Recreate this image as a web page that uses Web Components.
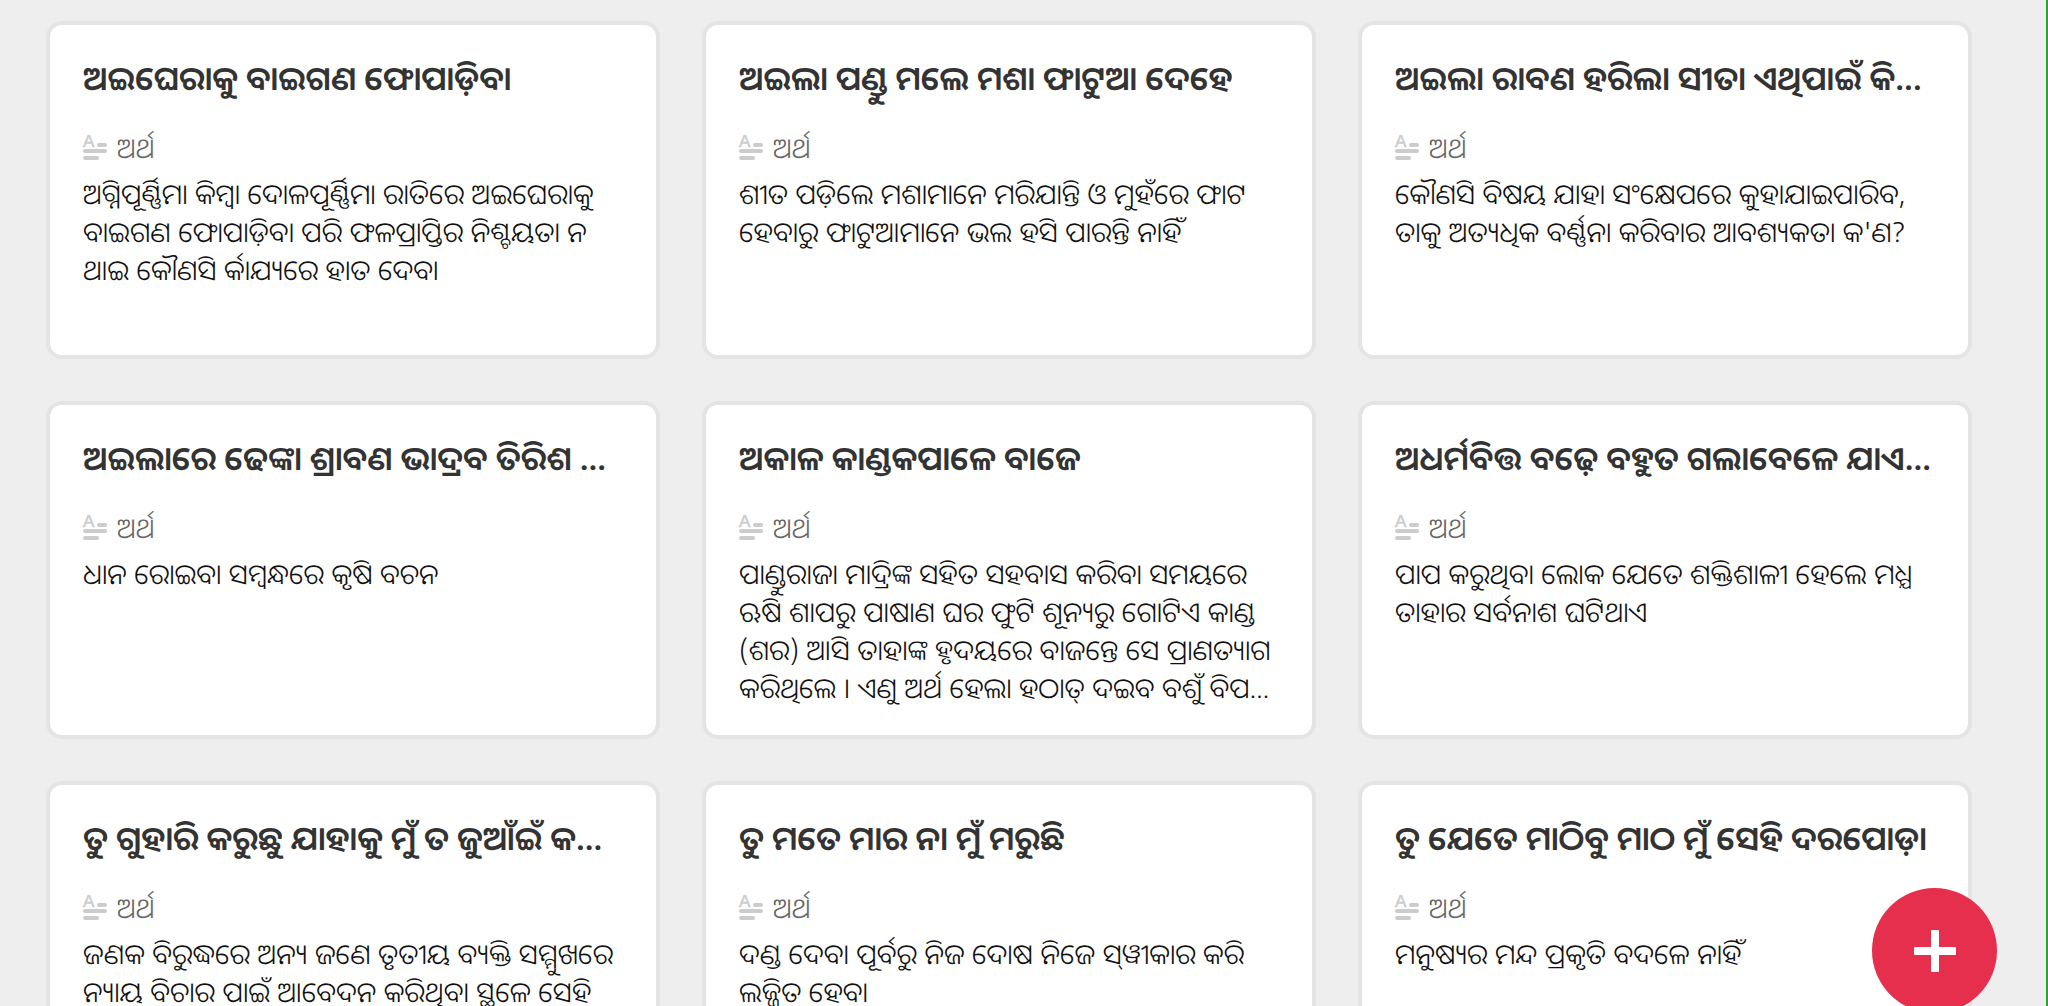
<!DOCTYPE html>
<html lang="or">
<head>
  <meta charset="UTF-8">
  <meta name="viewport" content="width=device-width, initial-scale=1">
  <title>ଢଗ ଢମାଳି</title>
  <style>
    body {
      margin: 0;
      font-family: "Noto Sans Oriya", "Noto Sans", "Liberation Sans", sans-serif;
      background-color: #eee;
    }
  </style>
</head>
<body>
  <proverb-board>
    <proverb-card>
      <span slot="title">ଅଇଘେରାକୁ ବାଇଗଣ ଫୋପାଡ଼ିବା</span>
      ଅଗ୍ନିପୂର୍ଣ୍ଣିମା କିମ୍ବା ଦୋଳପୂର୍ଣ୍ଣିମା ରାତିରେ ଅଇଘେରାକୁ<br>
      ବାଇଗଣ ଫୋପାଡ଼ିବା ପରି ଫଳପ୍ରାପ୍ତିର ନିଶ୍ଚୟତା ନ<br>
      ଥାଇ କୌଣସି ର୍କାଯ୍ୟରେ ହାତ ଦେବା
    </proverb-card>
    <proverb-card>
      <span slot="title">ଅଇଲା ପଣ୍ଡୁ ମଲେ ମଶା ଫାଟୁଆ ଦେହେ</span>
      ଶୀତ ପଡ଼ିଲେ ମଶାମାନେ ମରିଯାନ୍ତି ଓ ମୁହଁରେ ଫାଟ<br>
      ହେବାରୁ ଫାଟୁଆମାନେ ଭଲ ହସି ପାରନ୍ତି ନାହିଁ
    </proverb-card>
    <proverb-card>
      <span slot="title">ଅଇଲା ରାବଣ ହରିଲା ସୀତା ଏଥିପାଇଁ କି...</span>
      କୌଣସି ବିଷୟ ଯାହା ସଂକ୍ଷେପରେ କୁହାଯାଇପାରିବ,<br>
      ତାକୁ ଅତ୍ୟଧିକ ବର୍ଣ୍ଣନା କରିବାର ଆବଶ୍ୟକତା କ'ଣ?
    </proverb-card>
    <proverb-card>
      <span slot="title">ଅଇଲାରେ ଢେଙ୍କା ଶ୍ରାବଣ ଭାଦ୍ରବ ତିରିଶ ...</span>
      ଧାନ ରୋଇବା ସମ୍ବନ୍ଧରେ କୃଷି ବଚନ
    </proverb-card>
    <proverb-card>
      <span slot="title">ଅକାଳ କାଣ୍ଡକପାଳେ ବାଜେ</span>
      ପାଣ୍ଡୁରାଜା ମାଦ୍ରିଙ୍କ ସହିତ ସହବାସ କରିବା ସମୟରେ<br>
      ଋଷି ଶାପରୁ ପାଷାଣ ଘର ଫୁଟି ଶୂନ୍ୟରୁ ଗୋଟିଏ କାଣ୍ଡ<br>
      (ଶର) ଆସି ତାହାଙ୍କ ହୃଦୟରେ ବାଜନ୍ତେ ସେ ପ୍ରାଣତ୍ୟାଗ<br>
      କରିଥିଲେ । ଏଣୁ ଅର୍ଥ ହେଲା ହଠାତ୍ ଦଇବ ବଶୁଁ ବିପ...
    </proverb-card>
    <proverb-card>
      <span slot="title">ଅଧର୍ମବିତ୍ତ ବଢ଼େ ବହୁତ ଗଲାବେଳେ ଯାଏ...</span>
      ପାପ କରୁଥିବା ଲୋକ ଯେତେ ଶକ୍ତିଶାଳୀ ହେଲେ ମଧ୍ଯ<br>
      ତାହାର ସର୍ବନାଶ ଘଟିଥାଏ
    </proverb-card>
    <proverb-card>
      <span slot="title">ତୁ ଗୁହାରି କରୁଛୁ ଯାହାକୁ ମୁଁ ତ ଜୁଆଁଇଁ କ...</span>
      ଜଣକ ବିରୁଦ୍ଧରେ ଅନ୍ୟ ଜଣେ ତୃତୀୟ ବ୍ୟକ୍ତି ସମ୍ମୁଖରେ<br>
      ନ୍ୟାୟ ବିଚାର ପାଇଁ ଆବେଦନ କରିଥିବା ସ୍ଥଳେ ସେହି
    </proverb-card>
    <proverb-card>
      <span slot="title">ତୁ ମତେ ମାର ନା ମୁଁ ମରୁଛି</span>
      ଦଣ୍ଡ ଦେବା ପୂର୍ବରୁ ନିଜ ଦୋଷ ନିଜେ ସ୍&zwnj;ୱୀକାର କରି<br>
      ଲଜ୍ଜିତ ହେବା
    </proverb-card>
    <proverb-card>
      <span slot="title">ତୁ ଯେତେ ମାଠିବୁ ମାଠ ମୁଁ ସେହି ଦରପୋଡ଼ା</span>
      ମନୁଷ୍ୟର ମନ୍ଦ ପ୍ରକୃତି ବଦଳେ ନାହିଁ
    </proverb-card>
  </proverb-board>
  <add-button></add-button>

  <script>
    class ProverbBoard extends HTMLElement {
      constructor() {
        super();
        this.attachShadow({ mode: 'open' });
      }

      connectedCallback() {
        this.shadowRoot.innerHTML = `
          <style>
            :host {
              display: block;
              box-sizing: border-box;
              height: 100vh;
              overflow-y: auto;
              scrollbar-width: none;
              border-right: 2px solid #1ea82e;
            }

            main {
              display: grid;
              grid-template-columns: repeat(3, minmax(0, 1fr));
              grid-auto-rows: minmax(338px, auto);
              gap: 42px;
              padding: 21px 74px 42px 46px;
            }

            @media (max-width: 1200px) {
              main {
                grid-template-columns: minmax(0, 1fr);
                padding: 21px;
              }
            }
          </style>

          <main><slot></slot></main>
        `;
      }
    }

    class ProverbCard extends HTMLElement {
      constructor() {
        super();
        this.attachShadow({ mode: 'open' });
      }

      connectedCallback() {
        this.shadowRoot.innerHTML = `
          <style>
            :host {
              display: block;
              box-sizing: border-box;
              border: 4px solid #e4e4e4;
              border-radius: 16px;
              background-color: #fff;
              padding: 31px 33px 24px;
            }

            article {
              display: flex;
              flex-direction: column;
            }

            h2 {
              margin: 0;
              color: #333;
              font-size: 33px;
              font-weight: 600;
              line-height: 44px;
              white-space: nowrap;
            }

            h3 {
              display: flex;
              align-items: center;
              gap: 10px;
              margin: 28px 0 8px;
              color: #666;
              font-size: 28px;
              font-weight: 300;
              line-height: 38px;
            }

            svg {
              width: 24px;
              height: 26px;
              flex-shrink: 0;
              overflow: visible;
              fill: #ccc;
            }

            text {
              font: 17px "Liberation Sans", sans-serif;
              stroke: #ccc;
              stroke-width: 0.5;
            }

            p {
              margin: 0;
              color: #111;
              font-size: 28px;
              font-weight: 300;
              line-height: 38px;
              white-space: nowrap;
            }
          </style>

          <article>
            <h2><slot name="title"></slot></h2>
            <h3>
              <svg viewBox="0 0 24 26" aria-hidden="true">
                <text x="0" y="13">A</text>
                <rect x="14" y="9" width="10" height="4" rx="2" />
                <rect x="0" y="15" width="24" height="4" rx="2" />
                <rect x="0" y="22" width="16" height="4" rx="2" />
              </svg>
              ଅର୍ଥ
            </h3>
            <p><slot></slot></p>
          </article>
        `;
      }
    }

    class AddButton extends HTMLElement {
      constructor() {
        super();
        this.attachShadow({ mode: 'open' });
      }

      connectedCallback() {
        this.shadowRoot.innerHTML = `
          <style>
            :host {
              display: block;
              position: fixed;
              right: 51px;
              bottom: -7px;
            }

            button {
              display: grid;
              place-items: center;
              width: 125px;
              height: 125px;
              padding: 0;
              border: 0;
              border-radius: 50%;
              background-color: #e62e4d;
              cursor: pointer;
            }

            svg {
              width: 42px;
              height: 42px;
              fill: #fff;
            }
          </style>

          <button type="button" aria-label="Add">
            <svg viewBox="0 0 42 42" aria-hidden="true">
              <rect x="17" y="0" width="8" height="42" rx="1" />
              <rect x="0" y="17" width="42" height="8" rx="1" />
            </svg>
          </button>
        `;
      }
    }

    customElements.define('proverb-board', ProverbBoard);
    customElements.define('proverb-card', ProverbCard);
    customElements.define('add-button', AddButton);
  </script>
</body>
</html>
